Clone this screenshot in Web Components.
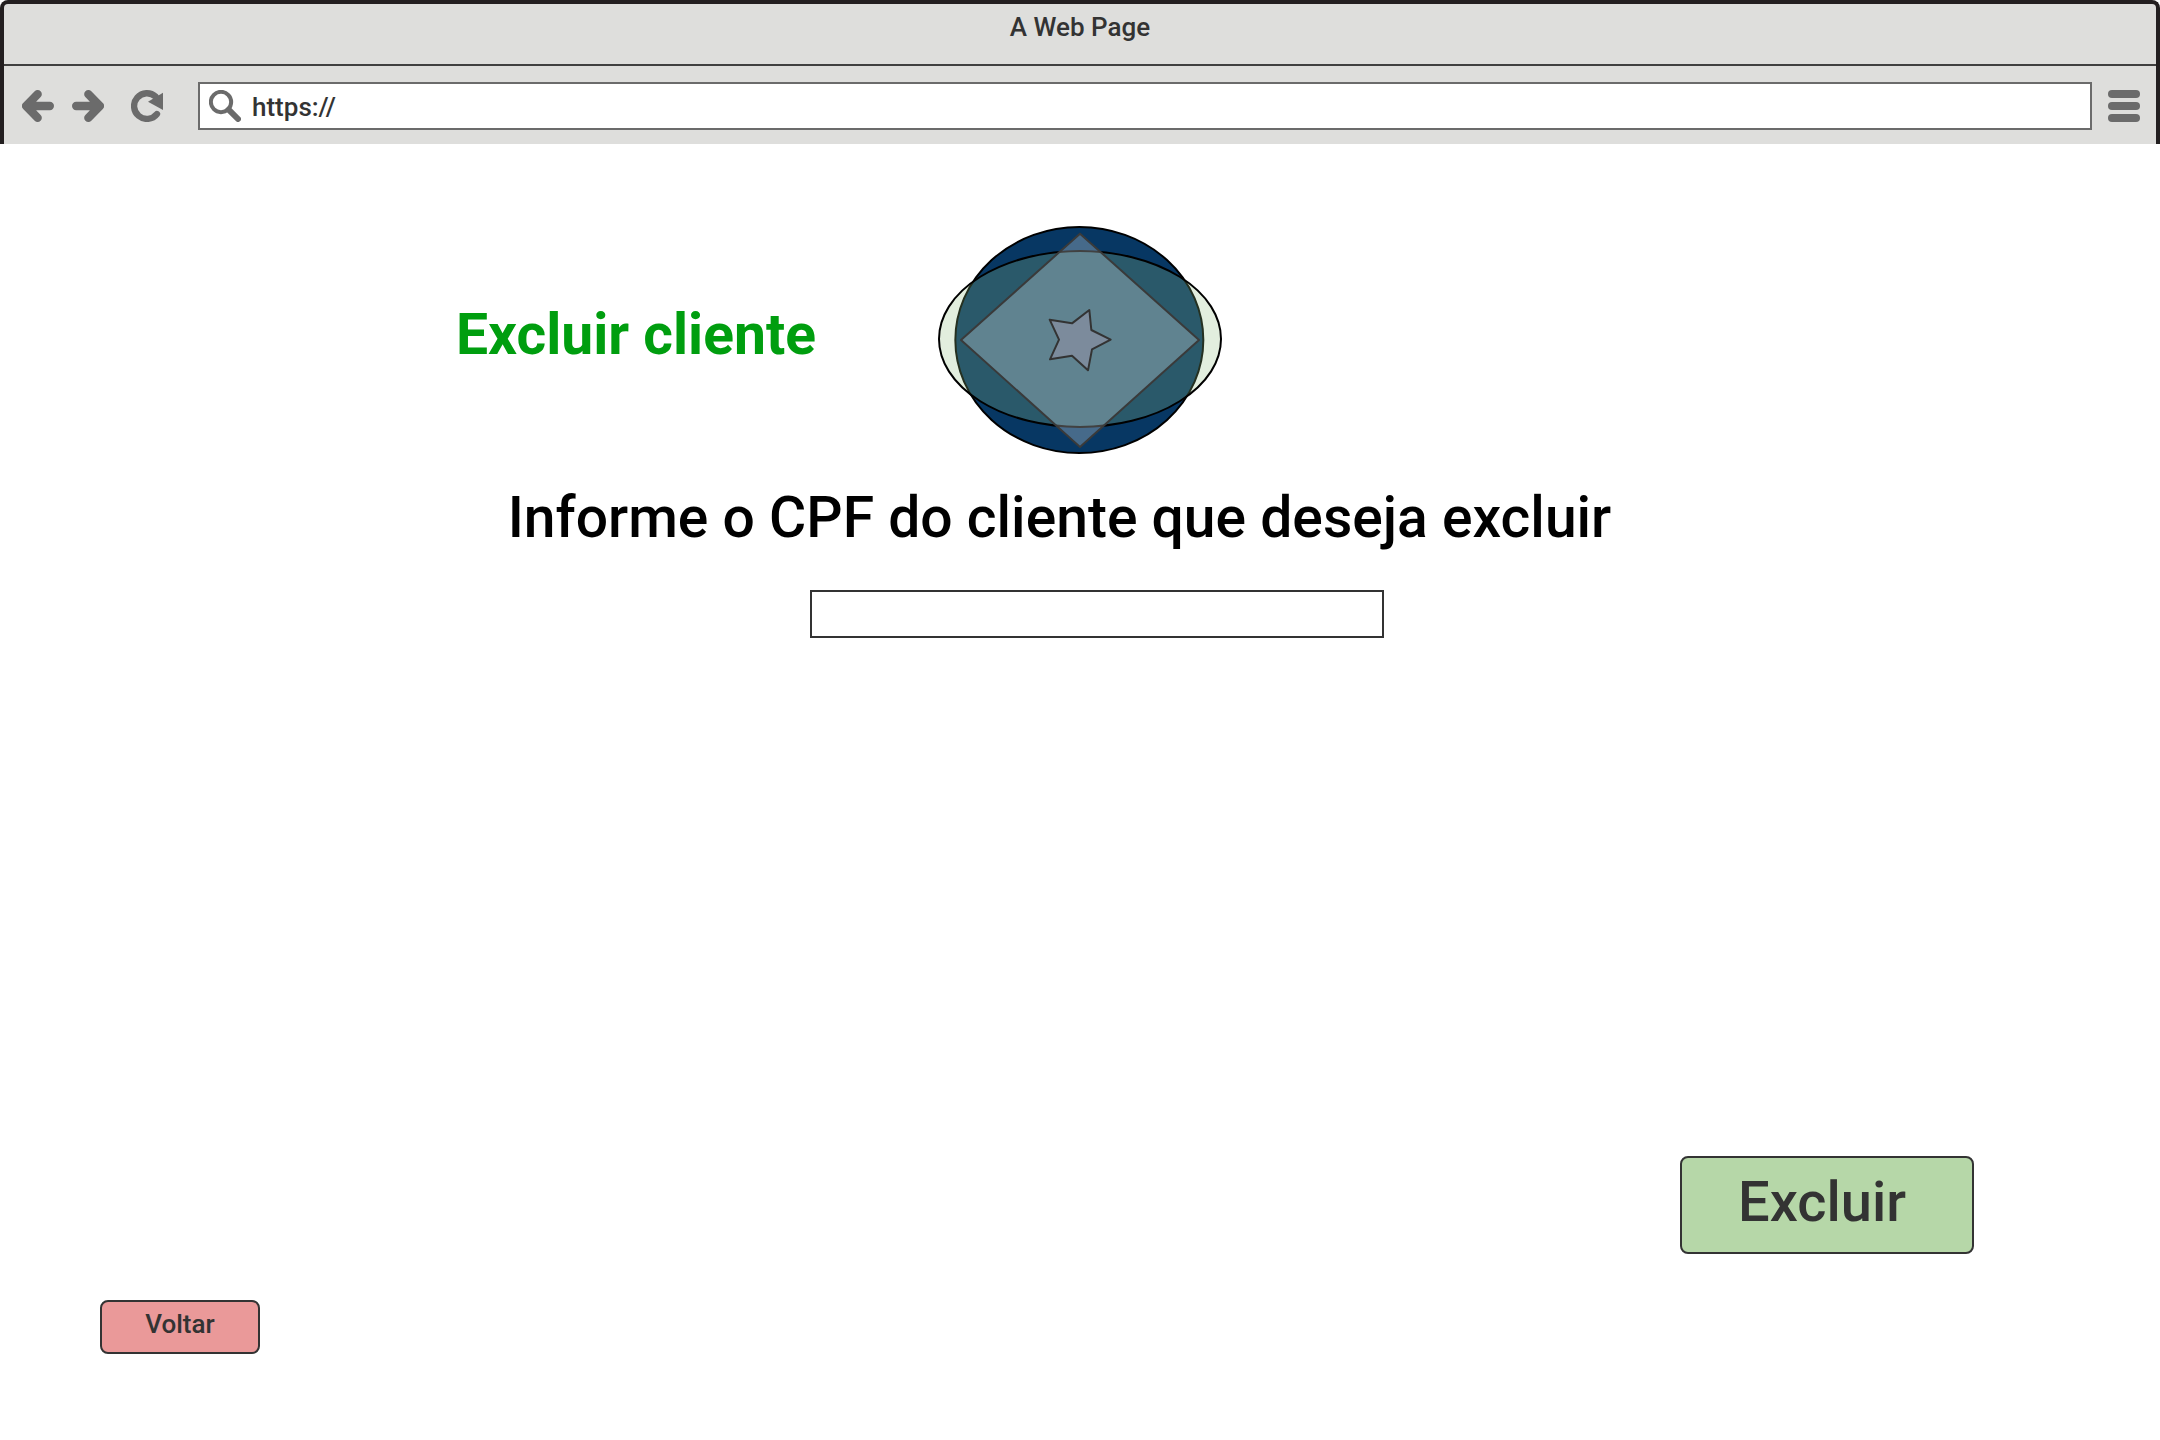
<!DOCTYPE html>
<html lang="pt-BR">
<head>
<meta charset="utf-8">
<title>Excluir cliente</title>
<style>
  html, body { margin: 0; background: #fff; }
  body {
    font-family: Roboto, "Liberation Sans", sans-serif;
    font-weight: 500;
    color: #333;
    --small: 26px;
    --large: 56px;
    --heading: 57px;
  }
</style>
</head>
<body>
<client-delete-page></client-delete-page>

<script>
const define = (name, html) => {
  const template = document.createElement('template');
  template.innerHTML = html;
  customElements.define(name, class extends HTMLElement {
    constructor() {
      super();
      this.attachShadow({ mode: 'open' }).append(template.content.cloneNode(true));
    }
  });
};

define('browser-chrome', `
  <style>
    :host { display: block; box-sizing: border-box; border: 4px solid #231f20; border-bottom: 0;
            border-radius: 8px 8px 0 0; background: #dededc; }
    .title { height: 60px; box-sizing: border-box; padding-top: 8px; text-align: center;
             font-size: var(--small); line-height: 30px; }
    .bar { display: flex; align-items: center; height: 80px; box-sizing: border-box;
           border-top: 2px solid #404040; padding: 2px 16px 0 18px; }
    .nav { display: flex; gap: 18px; margin-right: 27px; }
    button { border: 0; padding: 0; background: none; width: 32px; height: 32px; display: block; }
    svg { display: block; width: 32px; height: 32px; flex: none; }
    .address { flex: 1; display: flex; align-items: center; gap: 11px; margin: 0 16px 0 35px;
               height: 48px; box-sizing: border-box; border: 2px solid #6b6b6b; background: #fff;
               padding-left: 9px; }
    input { flex: 1; min-width: 0; border: 0; padding: 2px 0 0; background: none; font: inherit;
            font-size: var(--small); color: #333; outline: 0; }
  </style>
  <div class="title">A Web Page</div>
  <div class="bar">
    <div class="nav">
      <button aria-label="Back"><svg viewBox="0 0 96 96" fill="none" stroke="#6b6b6b" stroke-width="25" stroke-linecap="round" stroke-linejoin="round"><path d="M47 12.500L12.500 48L47 83.500M14 48H83.500"/></svg></button>
      <button aria-label="Forward"><svg viewBox="0 0 96 96" fill="none" stroke="#6b6b6b" stroke-width="25" stroke-linecap="round" stroke-linejoin="round"><path d="M49 12.500L83.500 48L49 83.500M82 48H12.500"/></svg></button>
    </div>
    <button aria-label="Reload"><svg viewBox="0 0 96 96"><path d="M78 72A38.500 38.500 0 1 1 74 20" fill="none" stroke="#6b6b6b" stroke-width="19" stroke-linecap="round"/><path d="M96 8V60L51 35Z" fill="#6b6b6b"/></svg></button>
    <label class="address">
      <svg viewBox="0 0 96 96" fill="none" stroke="#6b6b6b" aria-label="Address"><circle cx="36" cy="36" r="30.500" stroke-width="12"/><path d="M59 59L87 87" stroke-width="18" stroke-linecap="round"/></svg>
      <input type="text" value="https://">
    </label>
    <button aria-label="Menu"><svg viewBox="0 0 32 32" fill="#6b6b6b"><rect width="32" height="8" rx="4"/><rect y="12" width="32" height="8" rx="4"/><rect y="24" width="32" height="8" rx="4"/></svg></button>
  </div>`);

define('brand-logo', `
  <style>:host { display: block; } svg { display: block; width: 284px; height: 228px; }</style>
  <svg viewBox="54 48 852 684" stroke-width="6" stroke-linejoin="round" role="img" aria-label="Logo">
    <ellipse cx="478" cy="390" rx="372" ry="339" fill="#073763" stroke="#000"/>
    <ellipse cx="480" cy="387" rx="423" ry="264" fill="#8fbd7f" fill-opacity=".258" stroke="#000"/>
    <path d="M480 71L837 390L480 711L123 390Z" fill="#fff" fill-opacity=".255" stroke="#3a3a3a"/>
    <path d="M508 300L514 360L572 389L516 418L504 481L456 437L390 448L417 389L389 329L456 340Z" fill="#7c8b9c" stroke="#333"/>
  </svg>`);

define('action-button', `
  <style>
    :host { display: block; }
    button { display: block; width: 100%; height: 100%; box-sizing: border-box; margin: 0;
             border: 2px solid #333; border-radius: 8px; background: var(--fill); color: #333;
             font: inherit; padding: 0 var(--inset, 0px) 6px 0; }
  </style>
  <button type="button"><slot></slot></button>`);

define('cpf-field', `
  <style>
    :host { display: flex; flex-direction: column; align-items: center; }
    label { font-size: var(--heading); line-height: 64px; color: #000; margin-right: 41px; }
    input { width: 574px; max-width: 100%; height: 48px; box-sizing: border-box; margin: 40px 0 0 34px;
            border: 2px solid #333; border-radius: 0; background: #fff; font: inherit;
            font-size: var(--small); padding: 0 8px; outline: 0; }
  </style>
  <label for="cpf"><slot></slot></label>
  <input id="cpf" type="text">`);

define('client-delete-page', `
  <style>
    :host { display: flex; flex-direction: column; min-height: 100vh; }
    header { display: grid; grid-template-columns: 1fr auto 1fr; align-items: center; margin-top: 82px; }
    h1 { margin: 0 122px 10px 0; text-align: right; font-size: var(--heading); line-height: 64px;
         font-weight: 700; color: #009e0f; }
    cpf-field { margin-top: 32px; }
    footer { margin-top: auto; padding: 0 186px 86px 100px; display: flex; flex-direction: column; gap: 46px; }
    .delete { align-self: flex-end; width: 294px; height: 98px; font-size: var(--large); --fill: #b6d7a8; --inset: 10px; }
    .back { width: 160px; height: 54px; font-size: var(--small); --fill: #ea9999; }
  </style>
  <browser-chrome></browser-chrome>
  <header><h1>Excluir cliente</h1><brand-logo></brand-logo></header>
  <cpf-field>Informe o CPF do cliente que deseja excluir</cpf-field>
  <footer>
    <action-button class="delete">Excluir</action-button>
    <action-button class="back">Voltar</action-button>
  </footer>`);
</script>
</body>
</html>
